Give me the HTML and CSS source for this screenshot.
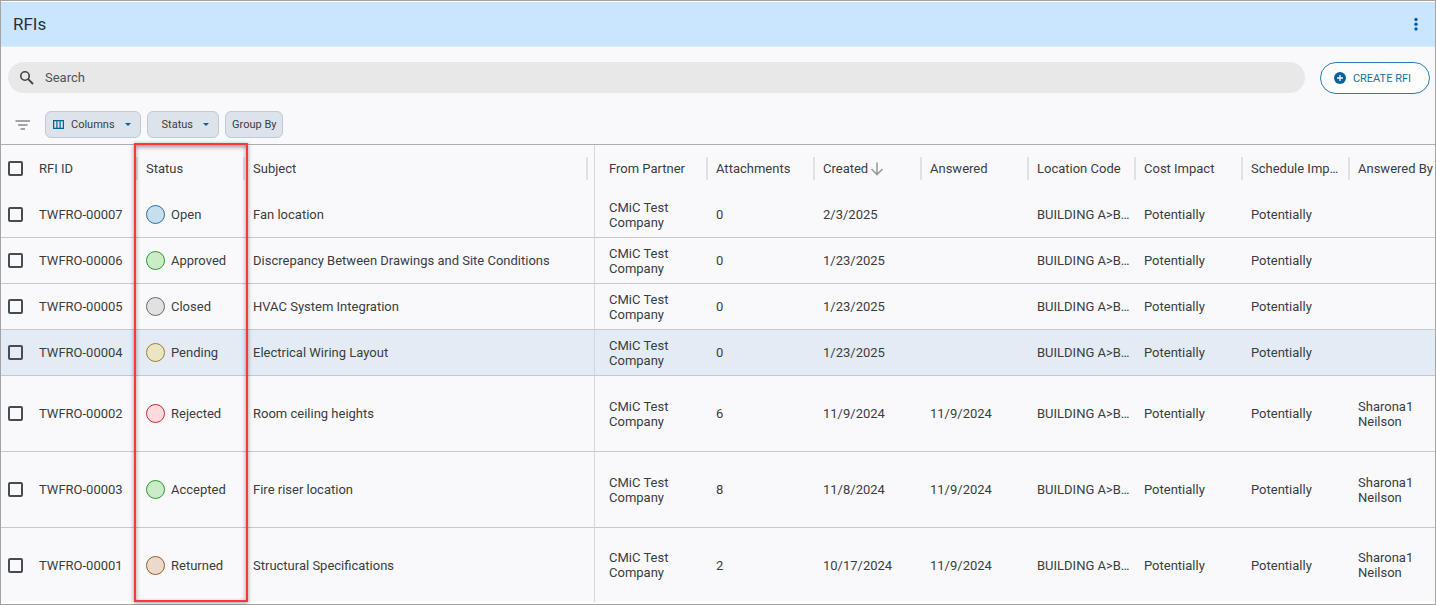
FILE: index.html
```html
<!DOCTYPE html>
<html lang="en">
<head>
<meta charset="utf-8">
<title>RFIs</title>
<link rel="stylesheet" href="styles.css">
</head>
<body>
<main class="app">
  <header class="titlebar">
    <h1 class="title">RFIs</h1>
    <button class="icon-button" type="button" aria-label="More options">
      <svg width="16" height="16" viewBox="0 0 16 16" fill="#00639b"><circle cx="8" cy="3.500" r="1.700"/><circle cx="8" cy="8.300" r="1.700"/><circle cx="8" cy="13" r="1.700"/></svg>
    </button>
  </header>

  <div class="search-row">
    <label class="search">
      <svg width="16" height="16" viewBox="0 0 16 16" fill="none" stroke="#3d4449"><circle cx="6" cy="6" r="4.2" stroke-width="1.6"/><path d="M9.2 9.2L14 14" stroke-width="1.9"/></svg>
      <input class="search-input" type="search" placeholder="Search" aria-label="Search">
    </label>
    <button class="create" type="button">
      <svg width="12" height="12" viewBox="0 0 12 12"><circle cx="6" cy="6" r="6" fill="#00639b"/><path d="M6 3V9M3 6H9" stroke="#f9f9fc" stroke-width="1.3"/></svg>
      CREATE RFI
    </button>
  </div>

  <div class="filters">
    <svg class="filter-icon" width="16" height="10" viewBox="0 0 16 10" fill="none" stroke="#85888b" stroke-width="1.4"><path d="M.5 1H15M3 5H12.500M5.500 9H10"/></svg>
    <button class="chip" type="button">
      <svg width="11" height="9" viewBox="0 0 11 9" fill="none" stroke="#00639b" stroke-width="1.2"><path d="M.6 .6H10.4V8.400H.6ZM3.900 .6V8.400M7.100 .6V8.400"/></svg>
      <span>Columns</span>
      <svg class="caret" width="6" height="3" viewBox="0 0 6 3" fill="#00639b"><path d="M0 0H6L3 3Z"/></svg>
    </button>
    <button class="chip chip-status" type="button">
      <span>Status</span>
      <svg class="caret" width="6" height="3" viewBox="0 0 6 3" fill="#00639b"><path d="M0 0H6L3 3Z"/></svg>
    </button>
    <button class="chip chip-plain" type="button">Group By</button>
  </div>

  <div class="grid">
    <table class="table">
      <colgroup><col class="c-check"><col class="c-std"><col class="c-std"><col><col class="c-partner"><col class="c-std"><col class="c-std"><col class="c-std"><col class="c-std"><col class="c-std"><col class="c-std"><col class="c-last"></colgroup>
      <thead>
        <tr>
          <th class="pick"><input class="check" type="checkbox" aria-label="Select all"></th>
          <th class="sep">RFI ID</th><th class="sep">Status</th><th class="sep subject">Subject</th>
          <th class="sep partner">From Partner</th><th class="sep">Attachments</th>
          <th class="sep"><span class="sorted">Created<svg width="14" height="14" viewBox="0 0 14 14" fill="none" stroke="#9a9b9d" stroke-width="1.6"><path d="M7 .5V12.500M1.500 7L7 12.500L12.500 7"/></svg></span></th>
          <th class="sep">Answered</th><th class="sep">Location Code</th><th class="sep">Cost Impact</th><th class="sep">Schedule Imp…</th><th class="last">Answered By</th>
        </tr>
      </thead>
      <tbody>
        <tr><td class="pick"><input class="check" type="checkbox" aria-label="Select TWFRO-00007"></td><td>TWFRO-00007</td><td><span class="status"><i class="dot open"></i>Open</span></td><td class="subject">Fan location</td><td class="partner">CMiC Test Company</td><td>0</td><td>2/3/2025</td><td></td><td>BUILDING A&gt;B…</td><td>Potentially</td><td>Potentially</td><td class="last"></td></tr>
        <tr><td class="pick"><input class="check" type="checkbox" aria-label="Select TWFRO-00006"></td><td>TWFRO-00006</td><td><span class="status"><i class="dot approved"></i>Approved</span></td><td class="subject">Discrepancy Between Drawings and Site Conditions</td><td class="partner">CMiC Test Company</td><td>0</td><td>1/23/2025</td><td></td><td>BUILDING A&gt;B…</td><td>Potentially</td><td>Potentially</td><td class="last"></td></tr>
        <tr><td class="pick"><input class="check" type="checkbox" aria-label="Select TWFRO-00005"></td><td>TWFRO-00005</td><td><span class="status"><i class="dot closed"></i>Closed</span></td><td class="subject">HVAC System Integration</td><td class="partner">CMiC Test Company</td><td>0</td><td>1/23/2025</td><td></td><td>BUILDING A&gt;B…</td><td>Potentially</td><td>Potentially</td><td class="last"></td></tr>
        <tr class="current"><td class="pick"><input class="check" type="checkbox" aria-label="Select TWFRO-00004"></td><td>TWFRO-00004</td><td><span class="status"><i class="dot pending"></i>Pending</span></td><td class="subject">Electrical Wiring Layout</td><td class="partner">CMiC Test Company</td><td>0</td><td>1/23/2025</td><td></td><td>BUILDING A&gt;B…</td><td>Potentially</td><td>Potentially</td><td class="last"></td></tr>
        <tr class="tall"><td class="pick"><input class="check" type="checkbox" aria-label="Select TWFRO-00002"></td><td>TWFRO-00002</td><td><span class="status"><i class="dot rejected"></i>Rejected</span></td><td class="subject">Room ceiling heights</td><td class="partner">CMiC Test Company</td><td>6</td><td>11/9/2024</td><td>11/9/2024</td><td>BUILDING A&gt;B…</td><td>Potentially</td><td>Potentially</td><td class="last">Sharona1 Neilson</td></tr>
        <tr class="tall"><td class="pick"><input class="check" type="checkbox" aria-label="Select TWFRO-00003"></td><td>TWFRO-00003</td><td><span class="status"><i class="dot approved"></i>Accepted</span></td><td class="subject">Fire riser location</td><td class="partner">CMiC Test Company</td><td>8</td><td>11/8/2024</td><td>11/9/2024</td><td>BUILDING A&gt;B…</td><td>Potentially</td><td>Potentially</td><td class="last">Sharona1 Neilson</td></tr>
        <tr class="tall"><td class="pick"><input class="check" type="checkbox" aria-label="Select TWFRO-00001"></td><td>TWFRO-00001</td><td><span class="status"><i class="dot returned"></i>Returned</span></td><td class="subject">Structural Specifications</td><td class="partner">CMiC Test Company</td><td>2</td><td>10/17/2024</td><td>11/9/2024</td><td>BUILDING A&gt;B…</td><td>Potentially</td><td>Potentially</td><td class="last">Sharona1 Neilson</td></tr>
      </tbody>
    </table>
    <div class="highlight"></div>
  </div>
</main>
</body>
</html>
```
FILE: styles.css
```css
* { box-sizing: border-box; }
body {
  margin: 0;
  font-family: Roboto, "Liberation Sans", sans-serif;
  font-size: 13px;
  line-height: 15px;
  color: #3a3d40;
  background: #fff;
}
button, input { font: inherit; color: inherit; }
button { cursor: pointer; }
.app {
  border: 1px solid #a3a3a3;
  padding: 1px 0 2px;
}
.titlebar {
  display: flex;
  align-items: center;
  justify-content: space-between;
  height: 45px;
  padding: 0 11px 0 12px;
  background: #cae6ff;
  border-bottom: 1px solid #deecfa;
}
.title { margin: 0; font-size: 17px; font-weight: 400; line-height: 20px; color: #2a3035; }
.icon-button { display: flex; padding: 0; border: 0; background: none; }
.search-row {
  display: flex;
  gap: 15px;
  padding: 15px 5px 17px 7px;
  background: #f9f9fc;
}
.search {
  flex: 1;
  display: flex;
  align-items: center;
  gap: 10px;
  height: 31px;
  padding: 0 11px;
  border-radius: 16px;
  background: #e8e8e9;
}
.search-input {
  flex: 1;
  padding: 0;
  border: 0;
  outline: 0;
  background: none;
}
.search-input::placeholder { color: #505457; opacity: 1; }
.create {
  display: flex;
  align-items: center;
  gap: 7px;
  height: 32px;
  padding: 0 18px 0 13px;
  border: 1px solid #2b7cab;
  border-radius: 16px;
  background: #fdfdfe;
  color: #1a70a3;
  font-size: 11px;
}
.filters {
  display: flex;
  align-items: center;
  gap: 6px;
  padding: 0 14px 6px;
  background: #f9f9fc;
}
.filter-icon { margin-right: 8px; }
.chip {
  display: flex;
  align-items: center;
  gap: 7px;
  height: 27px;
  padding: 0 9px 0 7px;
  border: 1px solid #c3c9cf;
  border-radius: 6px;
  background: #dde3ea;
  font-size: 11px;
}
.chip-status { padding-left: 14px; }
.chip-plain { padding: 0 6px; }
.caret { margin-left: 3px; }
.grid { position: relative; border-top: 1px solid #acadaf; }
.table {
  width: 100%;
  table-layout: fixed;
  border-spacing: 0;
  background: #f9f9fc;
}
.c-check { width: 30px; }
.c-std { width: 107px; }
.c-partner { width: 113px; }
.c-last { width: 85px; }
th, td {
  padding: 0 4px 0 8px;
  text-align: left;
  vertical-align: middle;
  overflow: hidden;
  white-space: nowrap;
  text-overflow: ellipsis;
}
th { position: relative; height: 47px; font-weight: 400; }
td { height: 46px; border-bottom: 1px solid #c5c8cc; }
.tall td { height: 76px; }
tbody tr:last-child td { height: 74px; border-bottom: 0; }
.sep::after {
  content: "";
  position: absolute;
  top: 12px;
  right: 0;
  width: 2px;
  height: 23px;
  background: #e0e1e3;
}
.subject { border-right: 1px solid #d3d8df; }
.subject.sep::after { right: 6px; }
.partner { padding-left: 14px; padding-right: 16px; white-space: normal; }
th.partner { white-space: nowrap; }
.pick { padding: 0 0 0 7px; }
.last { padding-right: 0; }
td.last { padding-right: 16px; white-space: normal; }
.current td { background: #e3ecf4; }
.check {
  appearance: none;
  display: block;
  width: 15px;
  height: 15px;
  margin: 0;
  border: 2px solid #464c52;
  border-radius: 2px;
}
.sorted { display: flex; align-items: center; gap: 2px; }
.status { display: flex; align-items: center; gap: 6px; }
.dot { width: 19px; height: 19px; border: 1px solid; border-radius: 50%; }
.open { background: #c7dfed; border-color: #25709f; }
.approved { background: #ccecc8; border-color: #28992a; }
.closed { background: #e1e1e2; border-color: #686868; }
.pending { background: #ebe5c5; border-color: #998322; }
.rejected { background: #fddade; border-color: #c32a32; }
.returned { background: #ecd9ca; border-color: #985c2a; }
.highlight {
  position: absolute;
  top: -2px;
  bottom: 0;
  left: 133px;
  width: 114px;
  border: 2px solid #fb3838;
  box-shadow: 0 1px 4px rgba(0, 0, 0, .4), inset 0 2px 4px rgba(0, 0, 0, .4);
  pointer-events: none;
}
```
